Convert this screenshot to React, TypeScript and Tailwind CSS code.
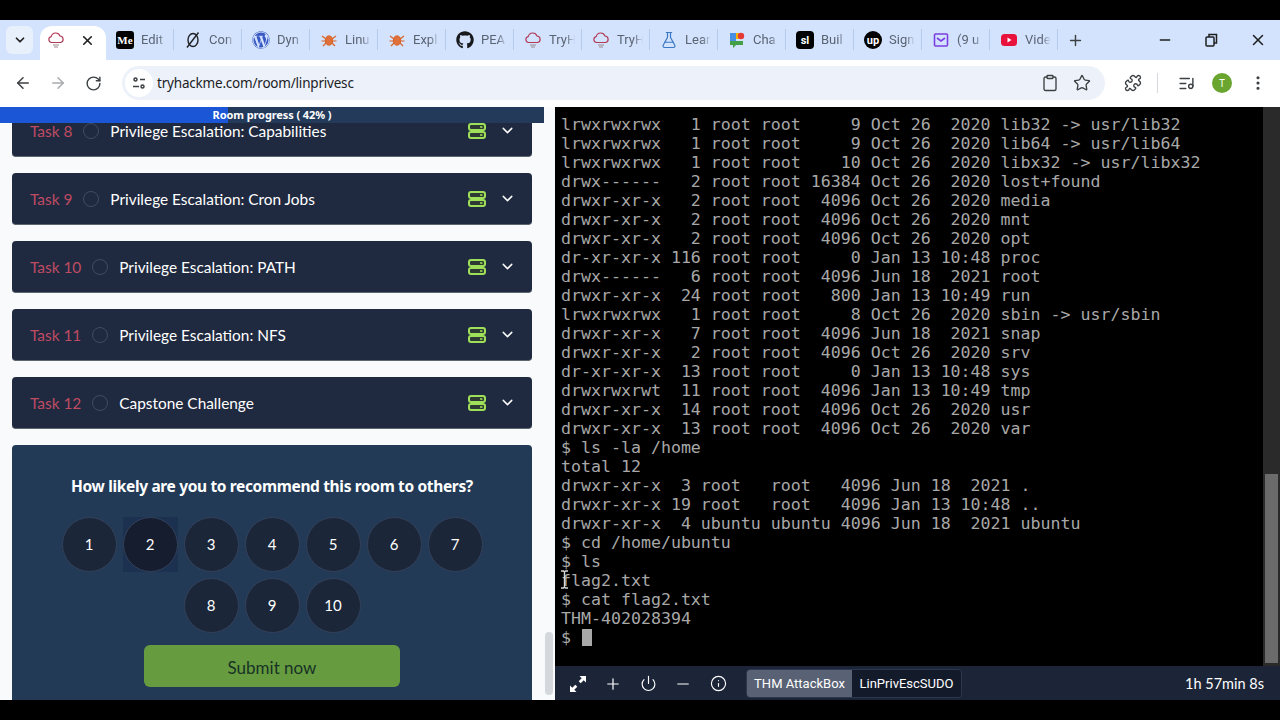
import {
  ArrowLeft,
  ArrowRight,
  ChevronDown,
  Clipboard,
  EllipsisVertical,
  FlaskConical,
  Info,
  ListMusic,
  Minus,
  Plus,
  Power,
  Puzzle,
  RotateCw,
  Star,
  X,
} from "lucide-react";
import { FaGithub, FaWordpress } from "react-icons/fa";
import type { ReactNode } from "react";

const THM = () => (
  <svg width="18" height="18" viewBox="0 0 18 18" fill="none" stroke="#b23a55" strokeWidth="1.2">
    <path d="M4.5 11.5a3 3 0 0 1-.3-5.9 4.6 4.6 0 0 1 8.8-.6 3.3 3.3 0 0 1 .6 6.5z" />
    <path d="M6 14h6M7 16h4" stroke="#9a8a90" />
  </svg>
);

const Bug = () => (
  <svg width="18" height="18" viewBox="0 0 18 18" fill="none" stroke="#d9642a" strokeWidth="1.2">
    <ellipse cx="9" cy="9.5" rx="3.6" ry="4.6" fill="#e0703a" />
    <path d="M2 5l4 3M16 5l-4 3M1.5 10h4M16.5 10h-4M3 15l3-3M15 15l-3-3" />
  </svg>
);

const Zero = () => (
  <svg width="18" height="18" viewBox="0 0 18 18" fill="none" stroke="#202124" strokeWidth="1.4">
    <ellipse cx="9" cy="9" rx="5" ry="6.5" />
    <path d="M14.5 1.5L3 16.5" />
  </svg>
);

const Chat = () => (
  <svg width="18" height="18" viewBox="0 0 18 18">
    <path d="M2 2h6v10H2z" fill="#4a90e2" />
    <path d="M8 2h3v6H8z" fill="#f4b400" />
    <path d="M2 10h13v4H8l-3 3v-3H2z" fill="#43a047" />
    <circle cx="13" cy="5" r="3.2" fill="#e53935" />
  </svg>
);

const Mail = () => (
  <svg width="18" height="18" viewBox="0 0 18 18" fill="none" stroke="#7b3fe4" strokeWidth="1.6">
    <rect x="2.5" y="3" width="13" height="12" rx="1" />
    <path d="M5 7l4 3 4-3" />
  </svg>
);

const Youtube = () => (
  <svg width="18" height="18" viewBox="0 0 18 18">
    <rect x="1" y="3" width="16" height="12" rx="3.5" fill="#e8123c" />
    <path d="M7.5 6.5l4 2.5-4 2.5z" fill="#fff" />
  </svg>
);

const ServerGlyph = () => (
  <svg width="18" height="16" viewBox="0 0 18 16" fill="#2c3a33" stroke="#9fe05a" strokeWidth="2" className="ml-auto">
    <rect x="1" y="1" width="16" height="6" rx="2" />
    <rect x="1" y="9" width="16" height="6" rx="2" />
    <path d="M12 4h2.5M12 12h2.5" strokeWidth="1.4" />
  </svg>
);

const Badge = ({ children, className }: { children: ReactNode; className: string }) => (
  <span className={`flex w-[18px] h-[18px] items-center justify-center bg-black text-white text-[11px] font-bold leading-none ${className}`}>
    {children}
  </span>
);

const tabs: { icon: ReactNode; label: string }[] = [
  { icon: <Badge className="rounded-[3px] font-['Liberation_Serif']">Me</Badge>, label: "Edit" },
  { icon: <Zero />, label: "Con" },
  { icon: <FaWordpress size={18} color="#3858c4" />, label: "Dyn" },
  { icon: <Bug />, label: "Linu" },
  { icon: <Bug />, label: "Expl" },
  { icon: <FaGithub size={18} color="#17191c" />, label: "PEA" },
  { icon: <THM />, label: "TryH" },
  { icon: <THM />, label: "TryH" },
  { icon: <FlaskConical size={18} color="#3b78c4" strokeWidth={1.6} />, label: "Lear" },
  { icon: <Chat />, label: "Cha" },
  { icon: <Badge className="rounded-[4px]">sl</Badge>, label: "Buil" },
  { icon: <Badge className="rounded-full">up</Badge>, label: "Sign" },
  { icon: <Mail />, label: "(9 u" },
  { icon: <Youtube />, label: "Vide" },
];

const tasks = [
  { n: 8, title: "Privilege Escalation: Capabilities" },
  { n: 9, title: "Privilege Escalation: Cron Jobs" },
  { n: 10, title: "Privilege Escalation: PATH" },
  { n: 11, title: "Privilege Escalation: NFS" },
  { n: 12, title: "Capstone Challenge" },
];

const terminalLines = [
  "lrwxrwxrwx   1 root root     9 Oct 26  2020 lib32 -> usr/lib32",
  "lrwxrwxrwx   1 root root     9 Oct 26  2020 lib64 -> usr/lib64",
  "lrwxrwxrwx   1 root root    10 Oct 26  2020 libx32 -> usr/libx32",
  "drwx------   2 root root 16384 Oct 26  2020 lost+found",
  "drwxr-xr-x   2 root root  4096 Oct 26  2020 media",
  "drwxr-xr-x   2 root root  4096 Oct 26  2020 mnt",
  "drwxr-xr-x   2 root root  4096 Oct 26  2020 opt",
  "dr-xr-xr-x 116 root root     0 Jan 13 10:48 proc",
  "drwx------   6 root root  4096 Jun 18  2021 root",
  "drwxr-xr-x  24 root root   800 Jan 13 10:49 run",
  "lrwxrwxrwx   1 root root     8 Oct 26  2020 sbin -> usr/sbin",
  "drwxr-xr-x   7 root root  4096 Jun 18  2021 snap",
  "drwxr-xr-x   2 root root  4096 Oct 26  2020 srv",
  "dr-xr-xr-x  13 root root     0 Jan 13 10:48 sys",
  "drwxrwxrwt  11 root root  4096 Jan 13 10:49 tmp",
  "drwxr-xr-x  14 root root  4096 Oct 26  2020 usr",
  "drwxr-xr-x  13 root root  4096 Oct 26  2020 var",
  "$ ls -la /home",
  "total 12",
  "drwxr-xr-x  3 root   root   4096 Jun 18  2021 .",
  "drwxr-xr-x 19 root   root   4096 Jan 13 10:48 ..",
  "drwxr-xr-x  4 ubuntu ubuntu 4096 Jun 18  2021 ubuntu",
  "$ cd /home/ubuntu",
  "$ ls",
  "flag2.txt",
  "$ cat flag2.txt",
  "THM-402028394",
];

const BrowserChrome = () => (
  <>
    <div className="flex h-10 shrink-0 items-end bg-[#d3e3fd] font-['Roboto',sans-serif]">
      <div className="flex w-[40px] shrink-0 self-center pl-[6px]">
        <div className="flex h-7 w-[27px] items-center justify-center rounded-md bg-[#e8f0fc]">
          <ChevronDown size={14} strokeWidth={3} color="#1f1f1f" />
        </div>
      </div>
      <div className="flex h-[34px] w-[66px] shrink-0 items-center justify-between rounded-t-xl bg-white pl-[7px] pr-[11px] pb-[6px]">
        <THM />
        <X size={15} strokeWidth={2.6} color="#1f1f1f" />
      </div>
      {tabs.map((tab, index) => (
        <div key={index} className="flex h-[34px] w-[68px] shrink-0 items-center pb-[6px] pl-[10px] border-r border-[#b4cbee] [border-image:linear-gradient(transparent_12%,#b4cbee_12%,#b4cbee_70%,transparent_70%)_1]">
          <span className="flex w-[18px] shrink-0 justify-center">{tab.icon}</span>
          <span className="ml-[7px] w-[26px] overflow-hidden whitespace-pre text-[13px] text-[#5a6472] [mask-image:linear-gradient(to_right,black_65%,transparent)]">
            {tab.label}
          </span>
        </div>
      ))}
      <div className="flex h-[34px] w-[34px] shrink-0 items-center justify-center pb-[6px]">
        <Plus size={17} strokeWidth={2} color="#3c4043" />
      </div>
      <div className="ml-auto flex h-10 items-center gap-[30px] pr-[13px]">
        <Minus size={16} strokeWidth={2} color="#1f1f1f" />
        <svg width="16" height="16" viewBox="0 0 16 16" fill="none" stroke="#1f1f1f" strokeWidth="1.5">
          <rect x="3" y="5" width="8" height="9" rx="1" />
          <path d="M6 5V2.5h7.5V11H11" />
        </svg>
        <X size={18} strokeWidth={2} color="#1f1f1f" />
      </div>
    </div>
    <div className="flex h-[47px] shrink-0 items-center bg-white pb-[1px]">
      <div className="flex w-[122px] shrink-0 items-center gap-[17px] pl-[14px]">
        <ArrowLeft size={18} color="#3c4043" />
        <ArrowRight size={18} color="#a8abb0" />
        <RotateCw size={17} color="#3c4043" className="ml-[1px]" />
      </div>
      <div className="flex h-[34px] w-[983px] shrink-0 items-center rounded-full bg-[#edf2fa] pr-[14px]">
        <span className="ml-[3px] flex h-7 w-7 items-center justify-center rounded-full bg-white">
          <svg width="16" height="14" viewBox="0 0 16 14" fill="none" stroke="#3c4043" strokeWidth="1.5">
            <circle cx="4.5" cy="3.5" r="1.5" />
            <path d="M9 3.5h5M2 10.5h6" />
            <circle cx="11.5" cy="10.5" r="1.5" />
          </svg>
        </span>
        <span className="ml-[4px] text-[13.5px] tracking-[-0.2px] text-[#202124]">tryhackme.com/room/linprivesc</span>
        <span className="ml-auto flex items-center gap-[14px]">
          <Clipboard size={18} color="#3c4043" strokeWidth={1.8} />
          <Star size={18} color="#3c4043" strokeWidth={1.8} />
        </span>
      </div>
      <div className="flex flex-1 items-center pl-[19px]">
        <Puzzle size={18} color="#3c4043" strokeWidth={1.8} />
        <span className="ml-[15px] h-5 w-px bg-[#d5d8dc]" />
        <ListMusic size={17} color="#3c4043" strokeWidth={2} className="ml-[20px]" />
        <span className="ml-[17px] flex h-5 w-5 items-center justify-center rounded-full bg-[#6aa62f] text-[10px] text-white">T</span>
        <EllipsisVertical size={18} color="#3c4043" strokeWidth={2.2} className="ml-[17px]" />
      </div>
    </div>
  </>
);

const TaskCard = ({ n, title }: { n: number; title: string }) => (
  <div className="flex h-[52px] shrink-0 items-center rounded-[4px] border-b border-[#5c6470] bg-[#1f2a40] pl-[18px] pr-[16px] font-['Lato',sans-serif] text-[15.4px]">
    <span className="pt-[2px] text-[#bf4b63]">Task {n}</span>
    <span className="ml-[11px] h-4 w-4 rounded-full border border-[#434c5e]" />
    <span className="ml-[11px] pt-[2px] text-white">{title}</span>
    <ServerGlyph />
    <ChevronDown size={17} color="#ffffff" strokeWidth={2} className="ml-[13px]" />
  </div>
);

const Score = ({ value }: { value: number }) => (
  <div className={value === 2 ? "bg-[#1c3150]" : ""}>
    <div className={`flex h-[55px] w-[55px] items-center justify-center rounded-full border border-[#33405a] text-[15px] text-white ${value === 2 ? "bg-[#151d2e]" : "bg-[#1b2639]"}`}>
      {value}
    </div>
  </div>
);

const RoomPanel = () => (
  <div className="relative flex w-[545px] shrink-0 flex-col gap-4 overflow-hidden bg-[#f9fafc] pl-3 pr-[13px] font-['Lato',sans-serif]">
    <div className="absolute left-0 top-0 z-10 h-4 w-[544px] bg-[#233a5a]">
      <div className="h-full w-[228px] bg-[#1a56d6]" />
      <span className="absolute inset-0 text-center font-['Noto_Sans',sans-serif] text-[11px] font-bold leading-4 tracking-[-0.1px] text-white">Room progress ( 42% )</span>
    </div>
    <div className="mt-[-2px] flex flex-col gap-4">
      {tasks.map((task) => (
        <TaskCard key={task.n} {...task} />
      ))}
    </div>
    <div className="flex h-[260px] shrink-0 flex-col items-center rounded-t-[4px] bg-[#233a56] pt-[29px]">
      <h3 className="font-['Noto_Sans',sans-serif] text-[15.5px] font-bold leading-6 tracking-[-0.35px] text-white">How likely are you to recommend this room to others?</h3>
      <div className="mt-[19px] flex w-[430px] flex-wrap justify-center gap-[6px]">
        {[1, 2, 3, 4, 5, 6, 7, 8, 9, 10].map((value) => (
          <Score key={value} value={value} />
        ))}
      </div>
      <button className="mt-[12px] h-[42px] w-[256px] rounded-[6px] bg-[#669c3f] pt-[3px] text-[17px] text-[#173226]">Submit now</button>
    </div>
  </div>
);

const Terminal = () => (
  <div className="relative flex flex-1 overflow-hidden bg-black">
    <div className="flex-1 whitespace-pre pl-[6px] pt-[8px] font-['DejaVu_Sans_Mono',monospace] text-[16.6px] leading-[19px] text-[#a8a8a8]">
      {terminalLines.map((line, index) => (
        <div key={index} className="h-[19px]">{line}</div>
      ))}
      <div className="flex h-[19px] items-center">
        $<span className="ml-[11px] h-[17px] w-[10px] bg-[#a8a8a8]" />
      </div>
    </div>
    <svg className="absolute left-[5px] top-[463px]" width="9" height="19" viewBox="0 0 9 19" fill="none" stroke="#d8d8d8" strokeWidth="1.4">
      <path d="M1 1h2.5l1 1 1-1H8M4.5 2v15M1 18h2.5l1-1 1 1H8" />
    </svg>
    <div className="flex w-[17px] shrink-0 flex-col bg-[#2a2a2a] px-[2px]">
      <div className="mt-auto h-[189px] bg-[#6b6b6b]" />
      <div className="h-[3px]" />
    </div>
  </div>
);

const MachineBar = () => (
  <div className="flex h-[34px] shrink-0 items-center bg-[#1c2538] pl-[14px] pr-4 pt-[1px] font-['Roboto',sans-serif] text-[13px] text-white">
    <svg width="18" height="18" viewBox="0 0 18 18" fill="#fff">
      <path d="M10.5 1H17v6.5l-2.3-2.3-3 3-2-2 3-3zM7.5 17H1v-6.5l2.3 2.3 3-3 2 2-3 3z" />
    </svg>
    <Plus size={18} strokeWidth={1.6} className="ml-[17px]" />
    <Power size={17} strokeWidth={1.6} className="ml-[18px]" />
    <Minus size={18} strokeWidth={1.6} className="ml-[17px]" />
    <Info size={17} strokeWidth={1.6} className="ml-[18px]" />
    <div className="ml-[19px] flex h-[29px] overflow-hidden rounded-[4px] border border-[#2d3850]">
      <span className="flex w-[105px] items-center justify-center bg-[#586274]">THM AttackBox</span>
      <span className="flex w-[109px] items-center justify-center bg-[#131b2b]">LinPrivEscSUDO</span>
    </div>
    <span className="ml-auto font-['Lato',sans-serif] text-[14.5px]">1h 57min 8s</span>
  </div>
);

export default function App() {
  return (
    <div className="flex h-[720px] w-[1280px] flex-col overflow-hidden bg-black">
      <div className="h-5 shrink-0 bg-black" />
      <BrowserChrome />
      <div className="flex min-h-0 flex-1">
        <RoomPanel />
        <div className="flex w-[10px] shrink-0 flex-col justify-end bg-[#f9fafc] pb-[5px]">
          <div className="h-[63px] w-2 rounded-full bg-[#d4d8dc]" />
        </div>
        <div className="flex min-w-0 flex-1 flex-col">
          <Terminal />
          <MachineBar />
        </div>
      </div>
      <div className="h-5 shrink-0 bg-black" />
    </div>
  );
}
